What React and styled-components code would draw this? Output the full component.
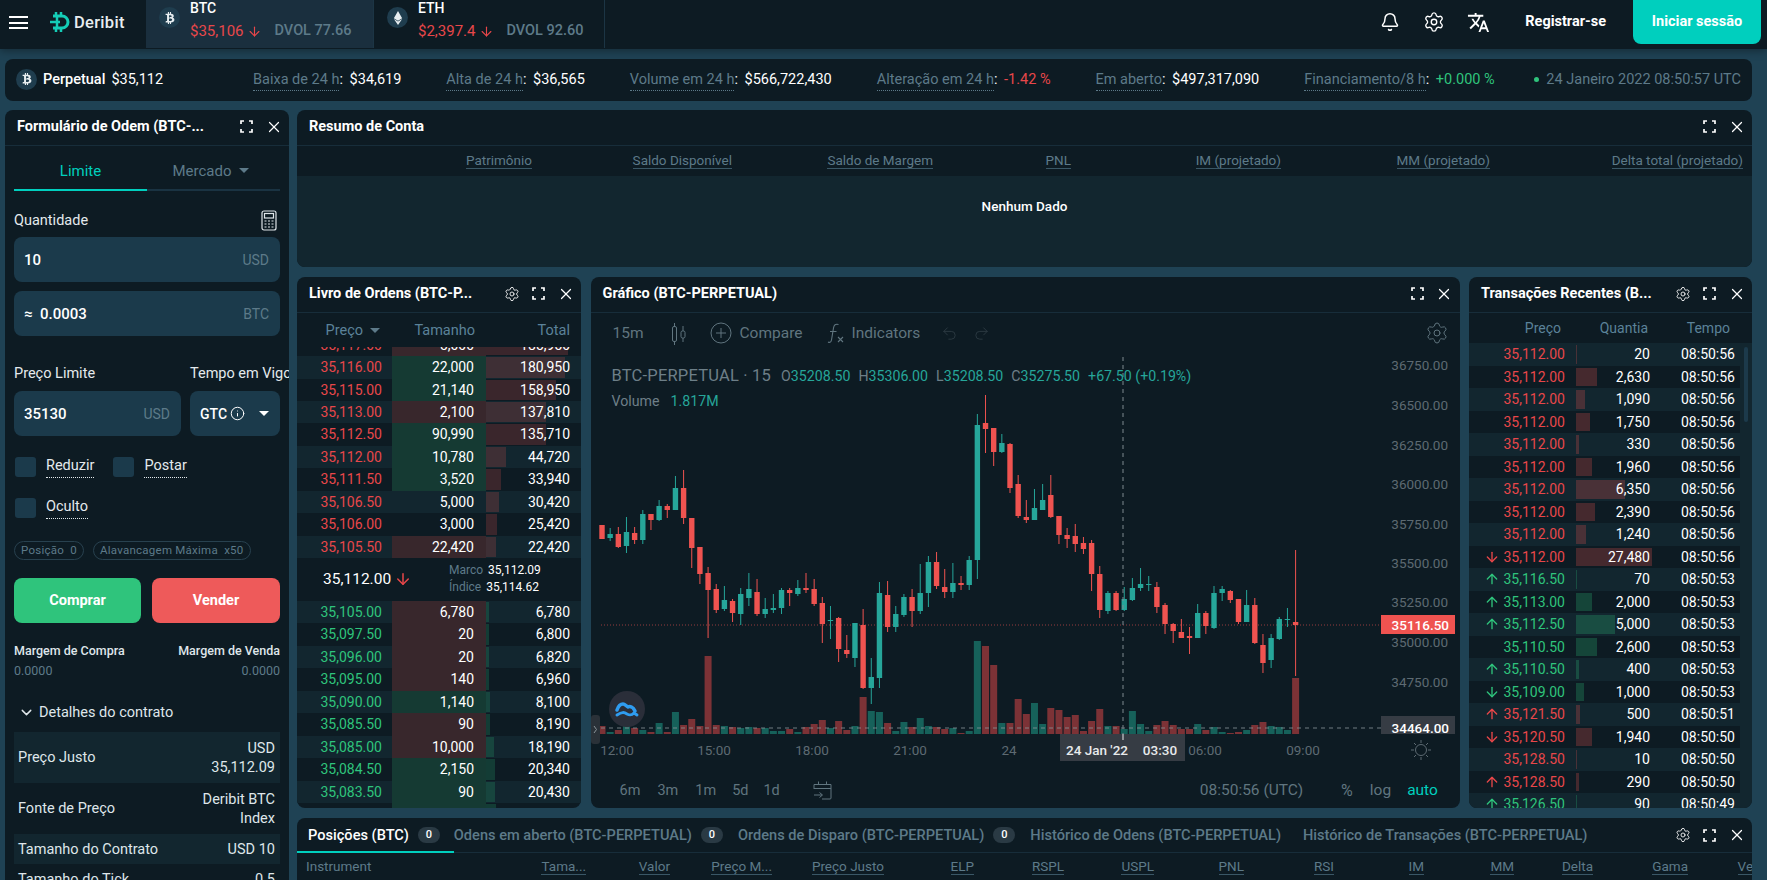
import React from 'react';
import styled, { createGlobalStyle } from 'styled-components';
import { ArrowDown, ArrowUp, Bell, ChevronDown, Info, Redo2, Settings, Undo2, X } from 'lucide-react';
import { FaBtc, FaEthereum } from 'react-icons/fa';
import { MdTranslate } from 'react-icons/md';

const PAGE = '#1f4254';
const PANEL = '#0d1b23';
const ALT = '#12262f';
const FIELD = '#1b3a4b';
const MUTED = '#5d7a89';
const HEAD = '#5b8299';
const TEAL = '#00cfbe';
const RED = '#e8474a';
const GREEN = '#2fc47c';

const GlobalStyle = createGlobalStyle`
  html, body {
    margin: 0;
    height: 100%;
    overflow: hidden;
    background: ${PAGE};
  }
  body {
    font-family: Roboto, "Liberation Sans", sans-serif;
    font-size: 14px;
    color: #fff;
  }
  * { box-sizing: border-box; }
`;

const Page = styled.div`
  height: 880px;
  display: flex;
  flex-direction: column;
  overflow: hidden;
`;

/* barra de cima */
const TopBar = styled.header`
  height: 49px;
  flex: none;
  display: flex;
  align-items: flex-start;
  background: ${PANEL};
  box-shadow: 0 2px 8px rgba(0, 0, 0, 0.35);
`;

const Burger = styled.div`
  width: 19px;
  height: 13px;
  margin: 16px 0 0 9px;
  border-top: 2px solid #fff;
  border-bottom: 2px solid #fff;
  position: relative;
  flex: none;
  &::after {
    content: '';
    position: absolute;
    left: 0;
    right: 0;
    top: 3.5px;
    height: 2px;
    background: #fff;
  }
`;

const LogoWrap = styled.div`
  width: 96px;
  flex: none;
  display: flex;
  align-items: center;
  gap: 3px;
  margin: 12px 0 0 22px;
  height: 20px;
`;

const LogoText = styled.span`
  font-size: 16.5px;
  font-weight: 500;
  color: #e8eef0;
  letter-spacing: 0.3px;
`;

const CoinTab = styled.div`
  height: 48px;
  width: ${p => p.$w}px;
  flex: none;
  display: flex;
  background: ${p => (p.$active ? '#1a2f3e' : 'transparent')};
  border-right: 1px solid #1c3544;
  padding-left: ${p => p.$pad}px;
`;

const CoinBadge = styled.div`
  width: 21px;
  height: 21px;
  border-radius: 50%;
  background: #1f3d4e;
  color: #e6edf0;
  display: flex;
  align-items: center;
  justify-content: center;
  flex: none;
  margin-top: ${p => p.$top || 0}px;
`;

const CoinInfo = styled.div`
  margin-left: 10px;
`;

const CoinName = styled.div`
  font-size: 14px;
  font-weight: 500;
  line-height: 16px;
`;

const CoinLine = styled.div`
  display: flex;
  align-items: center;
  gap: 3px;
  margin-top: 5px;
  line-height: 20px;
  font-size: 15px;
  white-space: nowrap;
  color: ${RED};
`;

const Dvol = styled.span`
  color: ${MUTED};
  font-weight: 500;
  margin-left: 10px;
  font-size: 14.5px;
`;

const TopRight = styled.div`
  margin-left: auto;
  display: flex;
  align-items: flex-start;
  padding-right: 6px;
`;

const TopIcon = styled.div`
  width: 24px;
  height: 24px;
  margin: 10px 20px 0 0;
  display: flex;
  align-items: center;
  justify-content: center;
`;

const Register = styled.div`
  font-weight: 700;
  font-size: 14.5px;
  line-height: 44px;
  margin: 0 27px 0 15px;
`;

const Login = styled.div`
  width: 128px;
  height: 44px;
  background: ${TEAL};
  border-radius: 0 0 8px 8px;
  font-weight: 700;
  font-size: 14.5px;
  line-height: 44px;
  text-align: center;
`;

/* faixa do instrumento */
const Content = styled.main`
  flex: 1;
  min-height: 0;
  padding: 10px 15px 0 5px;
  display: flex;
  flex-direction: column;
  gap: 9px;
`;

const Strip = styled.section`
  height: 42px;
  flex: none;
  border-radius: 8px;
  background: ${PANEL};
  display: flex;
  align-items: center;
  padding: 0 11px 2px 11px;
  font-size: 14.5px;
  white-space: nowrap;
`;

const Instrument = styled.div`
  display: flex;
  align-items: center;
  gap: 6px;
  width: 237px;
  font-weight: 500;
`;

const InstrumentPrice = styled.span`
  font-weight: 400;
`;

const Stats = styled.div`
  display: flex;
  gap: 45px;
  align-items: center;
`;

const StatLabel = styled.span`
  color: ${MUTED};
  font-weight: 400;
  border-bottom: 1px dotted ${MUTED};
  padding-bottom: 2px;
`;

const StatValue = styled.span`
  color: ${p => p.$color || '#fff'};
  margin-left: 3px;
`;

const Clock = styled.div`
  margin-left: auto;
  color: ${MUTED};
  display: flex;
  align-items: center;
  gap: 7px;
  &::before {
    content: '';
    width: 5px;
    height: 5px;
    border-radius: 50%;
    background: ${GREEN};
  }
`;

/* paineis */
const Workspace = styled.div`
  flex: 1;
  min-height: 0;
  display: grid;
  grid-template-columns: 284px 1fr;
  gap: 8px;
`;

const Panel = styled.section`
  background: ${PANEL};
  border-radius: 8px 8px ${p => (p.$flat ? '0 0' : '8px 8px')};
  overflow: hidden;
  display: flex;
  flex-direction: column;
  position: relative;
  min-width: 0;
`;

const PanelHeader = styled.div`
  height: 36px;
  flex: none;
  display: flex;
  align-items: center;
  padding: 0 2px 2px 12px;
  border-bottom: 1px solid #172d3a;
`;

const PanelTitle = styled.div`
  font-weight: 700;
  font-size: 14.5px;
  white-space: nowrap;
  flex: 1;
  min-width: 0;
`;

const IconSlot = styled.div`
  width: 27px;
  height: 20px;
  display: flex;
  align-items: center;
  justify-content: center;
  flex: none;
`;

const ExpandIcon = ({ size = 13 }) => (
  <svg width={size} height={size} viewBox="0 0 13 13" fill="none" stroke="currentColor" strokeWidth="1.7">
    <path d="M1 4V1h3M9 1h3v3M12 9v3H9M4 12H1V9" />
  </svg>
);

const PanelIcons = ({ gear }) => (
  <>
    {gear && (
      <IconSlot>
        <Settings size={16} strokeWidth={1.3} />
      </IconSlot>
    )}
    <IconSlot>
      <ExpandIcon />
    </IconSlot>
    <IconSlot>
      <X size={18} strokeWidth={1.6} />
    </IconSlot>
  </>
);

const PanelHead = ({ title, gear }) => (
  <PanelHeader>
    <PanelTitle>{title}</PanelTitle>
    <PanelIcons gear={gear} />
  </PanelHeader>
);

/* formulario */
const FormBody = styled.div`
  padding: 0 9px;
  flex: 1;
`;

const FormTabs = styled.div`
  height: 45px;
  display: grid;
  grid-template-columns: 1fr 1fr;
`;

const FormTab = styled.div`
  display: flex;
  align-items: center;
  justify-content: center;
  gap: 7px;
  font-size: 15px;
  padding-top: 6px;
  padding-right: ${p => (p.$active ? 0 : 6)}px;
  color: ${p => (p.$active ? TEAL : MUTED)};
  border-bottom: 2px solid ${p => (p.$active ? TEAL : '#1a3342')};
`;

const Caret = styled.span`
  width: 0;
  height: 0;
  border-left: 5px solid transparent;
  border-right: 5px solid transparent;
  border-top: 5px solid ${p => p.$color || MUTED};
  display: inline-block;
  flex: none;
`;

const QtyLabel = styled.div`
  margin: 15px 0 3px;
  height: 28px;
  display: flex;
  align-items: center;
  justify-content: space-between;
  font-size: 14.5px;
  color: #e4eaed;
  padding-right: 3px;
`;

const Field = styled.div`
  height: 45px;
  background: ${FIELD};
  border-radius: 8px;
  display: flex;
  align-items: center;
  justify-content: space-between;
  padding: 0 11px 0 10px;
  font-size: 15px;
  font-weight: 500;
  margin-bottom: ${p => p.$mb || 0}px;
  gap: 8px;
`;

const Unit = styled.span`
  font-size: 14px;
  font-weight: 400;
  color: ${MUTED};
`;

const PriceGrid = styled.div`
  display: grid;
  grid-template-columns: 167px 90px;
  column-gap: 9px;
  margin-top: 28px;
  row-gap: 7px;
`;

const PriceLabel = styled.div`
  height: 20px;
  line-height: 20px;
  font-size: 14.5px;
  color: #e4eaed;
  white-space: nowrap;
`;

const SelectValue = styled.div`
  display: flex;
  align-items: center;
  gap: 3px;
  font-weight: 500;
  font-size: 14px;
`;

const CheckRow = styled.div`
  display: flex;
  align-items: center;
  height: 20px;
  margin-top: 21px;
`;

const CheckBox = styled.span`
  width: 21px;
  height: 20px;
  background: ${FIELD};
  border-radius: 3px;
  margin: 0 10px 0 1px;
  flex: none;
`;

const CheckLabel = styled.span`
  font-size: 14.5px;
  color: #e4eaed;
  border-bottom: 1px dotted #e4eaed;
  padding-bottom: 3px;
  margin-right: 18px;
`;

const Chips = styled.div`
  display: flex;
  gap: 9px;
  margin-top: 23px;
`;

const Chip = styled.span`
  height: 19px;
  line-height: 17px;
  border: 1px solid #28414f;
  border-radius: 10px;
  padding: 0 6px;
  color: ${MUTED};
  font-size: 11.5px;
  letter-spacing: 0.25px;
  white-space: nowrap;
`;

const Actions = styled.div`
  display: grid;
  grid-template-columns: 127px 128px;
  justify-content: space-between;
  margin-top: 18px;
`;

const ActionButton = styled.div`
  height: 45px;
  border-radius: 8px;
  background: ${p => p.$bg};
  font-weight: 700;
  font-size: 14.5px;
  display: flex;
  align-items: center;
  justify-content: center;
`;

const Margins = styled.div`
  display: flex;
  justify-content: space-between;
  margin-top: 18px;
`;

const MarginCol = styled.div`
  text-align: ${p => p.$align};
  font-size: 12.5px;
  line-height: 20px;
  font-weight: 500;
  color: #dfe6ea;
`;

const MarginValue = styled.div`
  color: ${MUTED};
  font-weight: 400;
  font-size: 12.5px;
`;

const DetailsToggle = styled.div`
  display: flex;
  align-items: center;
  gap: 4px;
  height: 20px;
  margin: 21px 0 10px 4px;
  font-size: 14.5px;
  color: #dfe6ea;
`;

const DetailRow = styled.div`
  min-height: ${p => p.$h}px;
  display: flex;
  align-items: center;
  justify-content: space-between;
  gap: 16px;
  padding: 0 5px 0 4px;
  font-size: 14.5px;
  line-height: 19px;
  color: #dfe6ea;
  background: ${p => (p.$alt ? ALT : 'transparent')};
`;

const DetailValue = styled.div`
  text-align: right;
  max-width: ${p => p.$max || 200}px;
`;

/* resumo */
const SummaryHead = styled.div`
  height: 30px;
  flex: none;
  display: grid;
  grid-template-columns: 235px 200px 201px 138px 210px 209px 253px;
  align-items: center;
  font-size: 13.5px;
`;

const SummaryCol = styled.div`
  justify-self: end;
  color: ${MUTED};
  border-bottom: 1px solid #3a5766;
  line-height: 15px;
  white-space: nowrap;
`;

const Empty = styled.div`
  flex: 1;
  background: ${ALT};
  display: flex;
  align-items: center;
  justify-content: center;
  font-size: 13.5px;
  font-weight: 500;
  padding-bottom: 31px;
`;

const RightCol = styled.div`
  min-width: 0;
  display: flex;
  flex-direction: column;
  gap: 10px;
`;

const SummaryPanel = styled(Panel)`
  height: 157px;
  flex: none;
`;

const MiddleRow = styled.div`
  height: 531px;
  flex: none;
  display: grid;
  grid-template-columns: 284px 869px 283px;
  justify-content: space-between;
`;

/* livro */
const BookHead = styled.div`
  height: 34px;
  flex: none;
  display: grid;
  grid-template-columns: 95px 94px 95px;
  align-items: center;
  font-size: 14.5px;
  color: ${HEAD};
`;

const BookHeadCell = styled.div`
  display: flex;
  align-items: center;
  justify-content: flex-end;
  gap: 7px;
  padding-right: ${p => p.$pr}px;
`;

const Asks = styled.div`
  height: 211px;
  flex: none;
  overflow: hidden;
  display: flex;
  flex-direction: column;
  justify-content: flex-end;
`;

const Bids = styled.div`
  flex: 1;
  min-height: 0;
  overflow: hidden;
  padding-top: 2px;
`;

const BookRow = styled.div`
  height: 22.44px;
  flex: none;
  display: grid;
  grid-template-columns: 95px 94px 95px;
  background: ${p => (p.$alt ? ALT : 'transparent')};
  font-size: 14px;
  line-height: 22.44px;
`;

const BookPrice = styled.div`
  text-align: right;
  padding-right: 10px;
  color: ${p => (p.$side === 'ask' ? RED : GREEN)};
`;

const BookSize = styled.div`
  text-align: right;
  padding-right: 12px;
  background: ${p => (p.$tone === 'g' ? '#153a33' : p.$tone === 'r' ? '#38272c' : 'transparent')};
`;

const BookTotal = styled.div`
  position: relative;
  text-align: right;
  padding-right: 11px;
`;

const DepthBar = styled.span`
  position: absolute;
  left: 0;
  top: 1px;
  bottom: 1px;
  background: ${p => (p.$side === 'ask' ? 'rgba(239, 83, 80, 0.2)' : 'rgba(47, 196, 124, 0.2)')};
`;

const CellText = styled.span`
  position: relative;
`;

const MidRow = styled.div`
  height: 41px;
  flex: none;
  display: flex;
  align-items: center;
  padding-left: 26px;
`;

const MidPrice = styled.div`
  width: 99px;
  display: flex;
  align-items: center;
  gap: 3px;
  font-size: 15.5px;
  color: #fff;
`;

const MidInfo = styled.div`
  margin-left: 27px;
  font-size: 12px;
  line-height: 17px;
`;

const MidLabel = styled.span`
  color: ${MUTED};
  margin-right: 5px;
`;

/* grafico */
const ChartToolbar = styled.div`
  height: 40px;
  flex: none;
  display: flex;
  align-items: center;
  color: #60757f;
  font-size: 15.5px;
  padding-left: 22px;
`;

const ToolItem = styled.div`
  display: flex;
  align-items: center;
  gap: 8px;
  margin-right: ${p => p.$mr || 0}px;
  color: ${p => p.$color || 'inherit'};
`;

const ToolGear = styled.div`
  margin-left: auto;
  margin-right: 11px;
  display: flex;
`;

const ChartStage = styled.div`
  height: 418px;
  flex: none;
  position: relative;
  line-height: 0;
`;

const Legend = styled.div`
  position: absolute;
  left: 21px;
  top: 13px;
  line-height: 20px;
  color: #6d7f88;
  font-size: 14.2px;
`;

const LegendLine = styled.div`
  display: flex;
  align-items: baseline;
  margin-bottom: ${p => p.$mb || 0}px;
  white-space: nowrap;
`;

const LegendTitle = styled.span`
  font-size: 16.5px;
  letter-spacing: 0.2px;
  margin-right: 10px;
`;

const Ohlc = styled.span`
  color: ${p => p.$color || '#26a69a'};
  margin-right: ${p => p.$mr ?? 8}px;
`;

const RangeBar = styled.div`
  height: 38px;
  flex: none;
  display: flex;
  align-items: center;
  color: #60757f;
  font-size: 14.5px;
  padding-left: 29px;
  white-space: nowrap;
`;

const RangeItem = styled.span`
  margin-right: ${p => p.$mr}px;
`;

const RangeRight = styled.span`
  margin-left: ${p => p.$ml}px;
  font-size: ${p => p.$size || 15.5}px;
  color: ${p => p.$color || 'inherit'};
`;

/* transacoes */
const TradesHead = styled.div`
  height: 30px;
  flex: none;
  display: grid;
  grid-template-columns: 92px 87px 82px;
  align-items: center;
  color: ${HEAD};
  font-size: 14px;
  text-align: right;
`;

const TradesList = styled.div`
  flex: 1;
  min-height: 0;
  overflow: hidden;
  background: ${ALT};
  position: relative;
`;

const TradeRow = styled.div`
  width: 271px;
  height: 22.5px;
  display: grid;
  grid-template-columns: 107px 74px 85px;
  background: ${p => (p.$alt ? ALT : PANEL)};
  line-height: 22.5px;
  font-size: 14px;
`;

const TradePrice = styled.div`
  display: flex;
  align-items: center;
  justify-content: flex-end;
  gap: 3px;
  padding-right: 11px;
  color: ${p => (p.$color === 'r' ? RED : GREEN)};
`;

const TradeQty = styled.div`
  position: relative;
  text-align: right;
`;

const QtyBar = styled.span`
  position: absolute;
  left: 0;
  top: 2px;
  bottom: 2px;
  background: ${p => (p.$color === 'r' ? 'rgba(239, 83, 80, 0.25)' : 'rgba(47, 196, 124, 0.25)')};
`;

const TradeTime = styled.div`
  text-align: right;
`;

const ScrollThumb = styled.div`
  position: absolute;
  right: 4px;
  top: 4px;
  width: 4px;
  height: 75px;
  border-radius: 2px;
  background: #1c3a4b;
`;

/* painel de baixo */
const BottomHeader = styled.div`
  height: 35px;
  flex: none;
  display: flex;
  align-items: flex-end;
  padding-right: 2px;
  border-bottom: 1px solid #172d3a;
`;

const BottomTab = styled.div`
  height: 35px;
  display: flex;
  align-items: center;
  gap: 9px;
  padding: 0 ${p => p.$pr || 0}px 0 ${p => p.$pl}px;
  font-size: 14.6px;
  font-weight: 500;
  white-space: nowrap;
  color: ${p => (p.$active ? '#fff' : MUTED)};
  border-bottom: 2px solid ${p => (p.$active ? TEAL : 'transparent')};
  margin-bottom: -1px;
`;

const CountBadge = styled.span`
  width: 22px;
  height: 16px;
  line-height: 16px;
  border-radius: 8px;
  text-align: center;
  background: #2a3a44;
  color: #fff;
  font-size: 11px;
`;

const BottomIcons = styled.div`
  margin-left: auto;
  display: flex;
  align-self: center;
`;

const PositionHead = styled.div`
  display: grid;
  grid-template-columns: 200px 89px 84px 102px 112px repeat(7, 90px) 79px 95px 80px;
  height: 27px;
  align-items: center;
  white-space: nowrap;
  font-size: 13.5px;
`;

const PosCol = styled.div`
  justify-self: ${p => (p.$plain ? 'start' : 'end')};
  padding-left: ${p => (p.$plain ? 9 : 0)}px;
  color: ${MUTED};
  line-height: 15px;
  border-bottom: ${p => (p.$plain ? 'none' : '1px solid #3a5766')};
`;

/* dados */
const asks = [
  ['35,117.00', '5,000', '185,950', 'r', 82],
  ['35,116.00', '22,000', '180,950', 'g', 79],
  ['35,115.00', '21,140', '158,950', 'g', 70],
  ['35,113.00', '2,100', '137,810', 'r', 60],
  ['35,112.50', '90,990', '135,710', 'g', 60],
  ['35,112.00', '10,780', '44,720', 'g', 20],
  ['35,111.50', '3,520', '33,940', 'g', 15],
  ['35,106.50', '5,000', '30,420', '', 13],
  ['35,106.00', '3,000', '25,420', '', 11],
  ['35,105.50', '22,420', '22,420', 'r', 10],
];

const bids = [
  ['35,105.00', '6,780', '6,780', 'r', 3],
  ['35,097.50', '20', '6,800', 'r', 3],
  ['35,096.00', '20', '6,820', 'r', 3],
  ['35,095.00', '140', '6,960', 'r', 3],
  ['35,090.00', '1,140', '8,100', 'g', 4],
  ['35,085.50', '90', '8,190', 'r', 4],
  ['35,085.00', '10,000', '18,190', 'r', 8],
  ['35,084.50', '2,150', '20,340', 'g', 9],
  ['35,083.50', '90', '20,430', 'g', 9],
  ['35,083.00', '1,000', '21,430', 'g', 10],
];

const trades = [
  ['r', '', '35,112.00', '20', 1, '08:50:56'],
  ['r', '', '35,112.00', '2,630', 21, '08:50:56'],
  ['r', '', '35,112.00', '1,090', 9, '08:50:56'],
  ['r', '', '35,112.00', '1,750', 14, '08:50:56'],
  ['r', '', '35,112.00', '330', 3, '08:50:56'],
  ['r', '', '35,112.00', '1,960', 16, '08:50:56'],
  ['r', '', '35,112.00', '6,350', 49, '08:50:56'],
  ['r', '', '35,112.00', '2,390', 19, '08:50:56'],
  ['r', '', '35,112.00', '1,240', 10, '08:50:56'],
  ['r', 'down', '35,112.00', '27,480', 76, '08:50:56'],
  ['g', 'up', '35,116.50', '70', 1, '08:50:53'],
  ['g', 'up', '35,113.00', '2,000', 16, '08:50:53'],
  ['g', 'up', '35,112.50', '5,000', 39, '08:50:53'],
  ['g', '', '35,110.50', '2,600', 21, '08:50:53'],
  ['g', 'up', '35,110.50', '400', 3, '08:50:53'],
  ['g', 'down', '35,109.00', '1,000', 8, '08:50:53'],
  ['r', 'up', '35,121.50', '500', 4, '08:50:51'],
  ['r', 'down', '35,120.50', '1,940', 16, '08:50:50'],
  ['r', '', '35,128.50', '10', 1, '08:50:50'],
  ['r', 'up', '35,128.50', '290', 3, '08:50:50'],
  ['g', 'up', '35,126.50', '90', 1, '08:50:49'],
];

// topo do pavio, topo do corpo, base do corpo, base do pavio, verde?, altura do volume
const candles = [
  [524,524,538,538,0,8],[527,533,537,540,1,2],[526,533,546,547,0,4],[516,531,545,552,1,9],
  [526,532,539,543,0,6],[509,513,539,543,1,4],[513,513,519,529,0,2],[499,505,519,520,1,11],
  [503,505,509,517,0,2],[475,487,509,509,1,22],[469,487,517,523,0,9],[517,517,547,567,0,15],
  [546,546,573,583,0,8],[566,572,589,637,0,78],[583,588,609,612,0,9],[585,599,608,610,1,8],
  [598,600,612,621,0,7],[587,593,613,624,1,6],[572,588,597,605,1,7],[578,591,613,615,0,6],
  [597,608,613,617,1,6],[593,607,609,612,1,3],[587,589,607,613,1,3],[587,589,592,605,0,5],
  [579,587,593,595,1,2],[572,587,589,592,0,7],[578,588,603,605,0,10],[596,602,623,642,0,14],
  [605,619,620,638,1,6],[616,617,648,661,0,13],[634,649,653,657,0,4],[622,622,657,666,1,8],
  [608,624,687,688,0,37],[657,676,687,703,1,23],[581,592,677,687,1,22],[580,594,626,631,0,11],
  [605,613,626,631,1,3],[593,596,614,616,1,12],[588,596,610,626,0,7],[563,592,610,613,1,16],
  [555,561,592,606,1,8],[551,561,585,588,0,7],[568,586,591,597,0,5],[562,582,591,597,1,6],
  [575,582,584,589,0,1],[555,559,584,589,1,3],[413,424,559,578,1,93],[394,422,428,452,0,88],
  [427,427,451,465,0,69],[433,442,451,452,1,11],[442,443,487,492,0,11],[474,483,515,517,0,35],
  [499,516,519,522,0,20],[488,507,519,519,1,31],[483,499,509,509,1,10],[474,494,516,517,0,26],
  [515,515,534,543,0,24],[527,534,538,547,0,17],[523,535,543,551,0,19],[536,542,548,553,0,3],
  [539,542,573,590,0,13],[565,573,609,617,0,25],[590,592,610,613,1,8],[590,592,609,610,0,8],
  [586,598,609,610,1,5],[577,587,599,600,1,23],[567,583,587,590,1,10],[575,583,584,590,1,3],
  [581,586,606,612,0,9],[602,604,623,633,0,13],[622,623,630,642,0,9],[618,631,637,637,0,5],
  [626,635,637,653,0,5],[603,612,637,637,1,10],[610,612,625,633,0,4],[585,592,627,628,1,7],
  [585,588,592,600,1,2],[589,590,599,602,0,1],[598,598,621,623,0,2],[589,604,621,621,1,4],
  [597,604,642,643,0,9],[633,644,662,672,0,12],[633,637,659,667,1,8],[616,618,638,639,1,7],
  [607,618,619,626,1,4],[549,621,624,675,0,56],
];

const priceTicks = [
  ['36750.00', 369], ['36500.00', 409], ['36250.00', 449], ['36000.00', 488], ['35750.00', 528],
  ['35500.00', 567], ['35250.00', 606], ['35000.00', 646], ['34750.00', 686],
];

const timeTicks = [
  ['12:00', 616], ['15:00', 713], ['18:00', 811], ['21:00', 909], ['24', 1008], ['06:00', 1204], ['09:00', 1302],
];

const AXIS = '#5d6a72';
const CANDLE_UP = '#26a69a';
const CANDLE_DOWN = '#ef5350';

const CandleChart = () => (
  <svg width="869" height="418" viewBox="590 352 869 418" fontFamily="Roboto, sans-serif">
    <line x1="600" x2="1380" y1="624" y2="624" stroke="#ef5350" strokeOpacity="0.6" strokeDasharray="1 2" />
    {candles.map(([, , , , up, vol], i) => (
      <rect
        key={i}
        x={601 + 8.16 * i - 3.5}
        y={733 - vol}
        width="7"
        height={vol}
        fill={up ? '#16615a' : '#7c3236'}
      />
    ))}
    <line x1="600" x2="1380" y1="727" y2="727" stroke="#8a9499" strokeOpacity="0.8" strokeDasharray="4 4" />
    {candles.map(([top, bodyTop, bodyBottom, bottom, up], i) => {
      const x = 601 + 8.16 * i;
      const color = up ? CANDLE_UP : CANDLE_DOWN;
      return (
        <g key={i}>
          <line x1={x} x2={x} y1={top} y2={bottom} stroke={color} />
          <rect x={x - 2.7} y={bodyTop} width="5.4" height={Math.max(bodyBottom - bodyTop, 1)} fill={color} />
        </g>
      );
    })}
    <line x1="1122" x2="1122" y1="356" y2="733" stroke="#7f8a90" strokeDasharray="4 4" />
    {priceTicks.map(([label, y]) => (
      <text key={label} x="1447" y={y} textAnchor="end" fontSize="13.5" fill={AXIS}>
        {label}
      </text>
    ))}
    <rect x="1380" y="614" width="74" height="19" fill="#ef5350" />
    <text x="1448" y="629" textAnchor="end" fontSize="13.5" fontWeight="500" fill="#fff">
      35116.50
    </text>
    <rect x="1380" y="715" width="74" height="18" fill="#363c44" />
    <text x="1448" y="732" textAnchor="end" fontSize="13.5" fontWeight="500" fill="#fff">
      34464.00
    </text>
    {timeTicks.map(([label, x]) => (
      <text key={label} x={x} y="754" textAnchor="middle" fontSize="13.5" fill={AXIS}>
        {label}
      </text>
    ))}
    <rect x="1059" y="733" width="125" height="27" fill="#363c44" />
    <text x="1096" y="754" textAnchor="middle" fontSize="13.5" fontWeight="500" fill="#e8eaec">
      24 Jan '22
    </text>
    <text x="1159" y="754" textAnchor="middle" fontSize="13.5" fontWeight="500" fill="#e8eaec">
      03:30
    </text>
    <line x1="1122" x2="1122" y1="733" y2="739" stroke="#e8eaec" />
    <rect x="590" y="714" width="9" height="29" rx="3" fill="#2a3138" />
    <path d="M593 725l2.500 3.500-2.500 3.500" fill="none" stroke="#8a9499" />
    <circle cx="626" cy="708" r="18" fill="#2a2e39" />
    <path d="M616 709c1-3 3-6 6-6 2 0 3 2 5 3 2-1 5 0 7 4" fill="none" stroke="#2f9cf0" strokeWidth="3.500" strokeLinecap="round" strokeLinejoin="round" />
    <path d="M616 714c5-3 7-3 10-1 2 1 4 2 7-1l3 2" fill="none" stroke="#2f9cf0" strokeWidth="3" strokeLinecap="round" />
    <circle cx="1420" cy="749" r="5.500" fill="none" stroke={AXIS} />
    <path d="M1420 739v3M1420 756v3M1410 749h3M1427 749h3M1413 742l2 2M1425 754l2 2M1427 742l-2 2M1415 754l-2 2" stroke={AXIS} />
  </svg>
);

const DeribitMark = () => (
  <svg width="21" height="20" viewBox="0 0 21 20" fill="none" stroke="#14cdb7" strokeWidth="3">
    <path d="M3 4h9a6 6 0 0 1 0 12H3" />
    <path d="M7 4v12M0 10h10M6 0v4M11 0v4M6 16v4M11 16v4" strokeWidth="2.5" />
  </svg>
);

const CalcIcon = () => (
  <svg width="16" height="21" viewBox="0 0 16 21" fill="none" stroke="#dfe6ea" strokeWidth="1.200">
    <rect x="1" y="1" width="14" height="19" rx="2" />
    <rect x="3.500" y="3.500" width="9" height="4.500" />
    <path d="M3.500 11h2M7 11h2M10.500 11h2M3.500 14h2M7 14h2M10.500 14h2M3.500 17h2M7 17h2M10.500 17h2" />
  </svg>
);

const CandlesIcon = () => (
  <svg width="16" height="23" viewBox="0 0 16 23" fill="none" stroke="currentColor">
    <rect x="1.500" y="4.500" width="4" height="15" rx="1.500" />
    <path d="M3.500 1v3.500M3.500 19.500V23M12 4v5M12 16v4" />
    <rect x="10" y="9" width="4" height="7" rx="1.500" />
  </svg>
);

const CompareIcon = () => (
  <svg width="22" height="22" viewBox="0 0 22 22" fill="none" stroke="currentColor">
    <circle cx="11" cy="11" r="10" />
    <path d="M11 6v10M6 11h10" />
  </svg>
);

const FxIcon = () => (
  <svg width="17" height="22" viewBox="0 0 17 22" fill="none" stroke="currentColor" strokeWidth="1.100">
    <path d="M1 20c3 1.500 3.500-1 4-5l1.500-9c.5-3 2-4.500 5-3.500M3 9.500h6.500M11 15l5 5M16 15l-5 5" />
  </svg>
);

const CalendarIcon = () => (
  <svg width="20" height="20" viewBox="0 0 20 20" fill="none" stroke="currentColor">
    <path d="M1 9V4.500h17V18a1 1 0 0 1-1 1H9M1 8.500h17M5.500 1.500v3M13.500 1.500v3M1 15h8M6.500 12.500L9.500 15l-3 2.500" />
  </svg>
);

const statItems = [
  ['Baixa de 24 h', '$34,619'],
  ['Alta de 24 h', '$36,565'],
  ['Volume em 24 h', '$566,722,430'],
  ['Alteração em 24 h', '-1.42 %', RED],
  ['Em aberto', '$497,317,090'],
  ['Financiamento/8 h', '+0.000 %', GREEN],
];

const summaryCols = ['Patrimônio', 'Saldo Disponível', 'Saldo de Margem', 'PNL', 'IM (projetado)', 'MM (projetado)', 'Delta total (projetado)'];

const positionCols = ['Tama...', 'Valor', 'Preço M...', 'Preço Justo', 'ELP', 'RSPL', 'USPL', 'PNL', 'RSI', 'IM', 'MM', 'Delta', 'Gama', 'Vega'];

const OrderForm = () => (
  <Panel $flat>
    <PanelHead title="Formulário de Odem (BTC-..." />
    <FormBody>
      <FormTabs>
        <FormTab $active>Limite</FormTab>
        <FormTab>
          Mercado <Caret />
        </FormTab>
      </FormTabs>
      <QtyLabel>
        Quantidade <CalcIcon />
      </QtyLabel>
      <Field $mb={9}>
        10 <Unit>USD</Unit>
      </Field>
      <Field>
        ≈ &nbsp;0.0003 <Unit>BTC</Unit>
      </Field>
      <PriceGrid>
        <PriceLabel>Preço Limite</PriceLabel>
        <PriceLabel>Tempo em Vigor</PriceLabel>
        <Field>
          35130 <Unit>USD</Unit>
        </Field>
        <Field>
          <SelectValue>
            GTC <Info size={15} strokeWidth={1.600} />
          </SelectValue>
          <Caret $color="#fff" />
        </Field>
      </PriceGrid>
      <CheckRow>
        <CheckBox />
        <CheckLabel>Reduzir</CheckLabel>
        <CheckBox />
        <CheckLabel>Postar</CheckLabel>
      </CheckRow>
      <CheckRow>
        <CheckBox />
        <CheckLabel>Oculto</CheckLabel>
      </CheckRow>
      <Chips>
        <Chip>Posição&nbsp; 0</Chip>
        <Chip>Alavancagem Máxima&nbsp; x50</Chip>
      </Chips>
      <Actions>
        <ActionButton $bg={GREEN}>Comprar</ActionButton>
        <ActionButton $bg="#ee5a5a">Vender</ActionButton>
      </Actions>
      <Margins>
        <MarginCol $align="left">
          Margem de Compra
          <MarginValue>0.0000</MarginValue>
        </MarginCol>
        <MarginCol $align="right">
          Margem de Venda
          <MarginValue>0.0000</MarginValue>
        </MarginCol>
      </Margins>
      <DetailsToggle>
        <ChevronDown size={17} strokeWidth={2} /> Detalhes do contrato
      </DetailsToggle>
      <DetailRow $alt $h={51}>
        Preço Justo <DetailValue $max={90}>USD 35,112.09</DetailValue>
      </DetailRow>
      <DetailRow $h={51}>
        Fonte de Preço <DetailValue $max={90}>Deribit BTC Index</DetailValue>
      </DetailRow>
      <DetailRow $alt $h={30}>
        Tamanho do Contrato <DetailValue>USD 10</DetailValue>
      </DetailRow>
      <DetailRow $h={30}>
        Tamanho do Tick <DetailValue>0.5</DetailValue>
      </DetailRow>
    </FormBody>
  </Panel>
);

const OrderBook = () => (
  <Panel>
    <PanelHead title="Livro de Ordens (BTC-P..." gear />
    <BookHead>
      <BookHeadCell $pr={12}>
        Preço <Caret />
      </BookHeadCell>
      <BookHeadCell $pr={11}>Tamanho</BookHeadCell>
      <BookHeadCell $pr={11}>Total</BookHeadCell>
    </BookHead>
    <Asks>
      {asks.map(([price, size, total, tone, bar], i) => (
        <BookRow key={price} $alt={i % 2 === 1}>
          <BookPrice $side="ask">{price}</BookPrice>
          <BookSize $tone={tone}>{size}</BookSize>
          <BookTotal>
            <DepthBar $side="ask" style={{ width: bar }} />
            <CellText>{total}</CellText>
          </BookTotal>
        </BookRow>
      ))}
    </Asks>
    <MidRow>
      <MidPrice>
        35,112.00 <ArrowDown size={18} color={RED} strokeWidth={2} />
      </MidPrice>
      <MidInfo>
        <div>
          <MidLabel>Marco</MidLabel>35,112.09
        </div>
        <div>
          <MidLabel>Índice</MidLabel>35,114.62
        </div>
      </MidInfo>
    </MidRow>
    <Bids>
      {bids.map(([price, size, total, tone, bar], i) => (
        <BookRow key={price} $alt={i % 2 === 0}>
          <BookPrice $side="bid">{price}</BookPrice>
          <BookSize $tone={tone}>{size}</BookSize>
          <BookTotal>
            <DepthBar $side="bid" style={{ width: bar }} />
            <CellText>{total}</CellText>
          </BookTotal>
        </BookRow>
      ))}
    </Bids>
  </Panel>
);

const Chart = () => (
  <Panel>
    <PanelHead title="Gráfico (BTC-PERPETUAL)" />
    <ChartToolbar>
      <ToolItem $mr={27}>15m</ToolItem>
      <ToolItem $mr={23}>
        <CandlesIcon />
      </ToolItem>
      <ToolItem $mr={24}>
        <CompareIcon /> Compare
      </ToolItem>
      <ToolItem $mr={21}>
        <FxIcon /> Indicators
      </ToolItem>
      <ToolItem $mr={15} $color="#2f3d46">
        <Undo2 size={17} strokeWidth={1.200} />
      </ToolItem>
      <ToolItem $color="#2f3d46">
        <Redo2 size={17} strokeWidth={1.200} />
      </ToolItem>
      <ToolGear>
        <Settings size={24} strokeWidth={1} />
      </ToolGear>
    </ChartToolbar>
    <ChartStage>
      <CandleChart />
      <Legend>
        <LegendLine $mb={5}>
          <LegendTitle>BTC-PERPETUAL · 15</LegendTitle>
          <Ohlc $color="#6d7f88" $mr={0}>O</Ohlc>
          <Ohlc>35208.50</Ohlc>
          <Ohlc $color="#6d7f88" $mr={0}>H</Ohlc>
          <Ohlc>35306.00</Ohlc>
          <Ohlc $color="#6d7f88" $mr={0}>L</Ohlc>
          <Ohlc>35208.50</Ohlc>
          <Ohlc $color="#6d7f88" $mr={0}>C</Ohlc>
          <Ohlc>35275.50</Ohlc>
          <Ohlc>+67.50 (+0.19%)</Ohlc>
        </LegendLine>
        <LegendLine>
          <Ohlc $color="#6d7f88" $mr={11}>Volume</Ohlc>
          <Ohlc>1.817M</Ohlc>
        </LegendLine>
      </Legend>
    </ChartStage>
    <RangeBar>
      <RangeItem $mr={17}>6m</RangeItem>
      <RangeItem $mr={17}>3m</RangeItem>
      <RangeItem $mr={16}>1m</RangeItem>
      <RangeItem $mr={15}>5d</RangeItem>
      <RangeItem $mr={33}>1d</RangeItem>
      <CalendarIcon />
      <RangeRight $ml={367}>08:50:56 (UTC)</RangeRight>
      <RangeRight $ml={38} $size={16}>%</RangeRight>
      <RangeRight $ml={17}>log</RangeRight>
      <RangeRight $ml={16} $color={TEAL}>auto</RangeRight>
    </RangeBar>
  </Panel>
);

const Trades = () => (
  <Panel>
    <PanelHead title="Transações Recentes (B..." gear />
    <TradesHead>
      <div>Preço</div>
      <div>Quantia</div>
      <div>Tempo</div>
    </TradesHead>
    <TradesList>
      {trades.map(([color, dir, price, qty, bar, time], i) => (
        <TradeRow key={i} $alt={i % 2 === 0}>
          <TradePrice $color={color}>
            {dir === 'up' && <ArrowUp size={16} strokeWidth={2} />}
            {dir === 'down' && <ArrowDown size={16} strokeWidth={2} />}
            {price}
          </TradePrice>
          <TradeQty>
            <QtyBar $color={color} style={{ width: bar }} />
            <CellText>{qty}</CellText>
          </TradeQty>
          <TradeTime>{time}</TradeTime>
        </TradeRow>
      ))}
      <ScrollThumb />
    </TradesList>
  </Panel>
);

const Positions = () => (
  <Panel $flat>
    <BottomHeader>
      <BottomTab $active $pl={11} $pr={14}>
        Posições (BTC) <CountBadge>0</CountBadge>
      </BottomTab>
      <BottomTab $pl={0} $pr={15}>
        Odens em aberto (BTC-PERPETUAL) <CountBadge>0</CountBadge>
      </BottomTab>
      <BottomTab $pl={0} $pr={15}>
        Ordens de Disparo (BTC-PERPETUAL) <CountBadge>0</CountBadge>
      </BottomTab>
      <BottomTab $pl={0}>Histórico de Odens (BTC-PERPETUAL)</BottomTab>
      <BottomTab $pl={22}>Histórico de Transações (BTC-PERPETUAL)</BottomTab>
      <BottomIcons>
        <PanelIcons gear />
      </BottomIcons>
    </BottomHeader>
    <PositionHead>
      <PosCol $plain>Instrument</PosCol>
      {positionCols.map(col => (
        <PosCol key={col}>{col}</PosCol>
      ))}
    </PositionHead>
  </Panel>
);

export default function App() {
  return (
    <Page>
      <GlobalStyle />
      <TopBar>
        <Burger />
        <LogoWrap>
          <DeribitMark />
          <LogoText>Deribit</LogoText>
        </LogoWrap>
        <CoinTab $active $w={228} $pad={13}>
          <CoinBadge $top={7}>
            <FaBtc size={12} />
          </CoinBadge>
          <CoinInfo>
            <CoinName>BTC</CoinName>
            <CoinLine>
              $35,106 <ArrowDown size={15} strokeWidth={1.800} />
              <Dvol>DVOL 77.66</Dvol>
            </CoinLine>
          </CoinInfo>
        </CoinTab>
        <CoinTab $w={231} $pad={13}>
          <CoinBadge $top={7}>
            <FaEthereum size={14} />
          </CoinBadge>
          <CoinInfo>
            <CoinName>ETH</CoinName>
            <CoinLine>
              $2,397.4 <ArrowDown size={15} strokeWidth={1.800} />
              <Dvol>DVOL 92.60</Dvol>
            </CoinLine>
          </CoinInfo>
        </CoinTab>
        <TopRight>
          <TopIcon>
            <Bell size={20} strokeWidth={1.800} />
          </TopIcon>
          <TopIcon>
            <Settings size={22} strokeWidth={1.500} />
          </TopIcon>
          <TopIcon>
            <MdTranslate size={23} />
          </TopIcon>
          <Register>Registrar-se</Register>
          <Login>Iniciar sessão</Login>
        </TopRight>
      </TopBar>
      <Content>
        <Strip>
          <Instrument>
            <CoinBadge>
              <FaBtc size={12} />
            </CoinBadge>
            Perpetual <InstrumentPrice>$35,112</InstrumentPrice>
          </Instrument>
          <Stats>
            {statItems.map(([label, value, color]) => (
              <div key={label}>
                <StatLabel>{label}</StatLabel>:{' '}
                <StatValue $color={color}>{value}</StatValue>
              </div>
            ))}
          </Stats>
          <Clock>24 Janeiro 2022 08:50:57 UTC</Clock>
        </Strip>
        <Workspace>
          <OrderForm />
          <RightCol>
            <SummaryPanel>
              <PanelHead title="Resumo de Conta" />
              <SummaryHead>
                {summaryCols.map(col => (
                  <SummaryCol key={col}>{col}</SummaryCol>
                ))}
              </SummaryHead>
              <Empty>Nenhum Dado</Empty>
            </SummaryPanel>
            <MiddleRow>
              <OrderBook />
              <Chart />
              <Trades />
            </MiddleRow>
            <Positions />
          </RightCol>
        </Workspace>
      </Content>
    </Page>
  );
}
